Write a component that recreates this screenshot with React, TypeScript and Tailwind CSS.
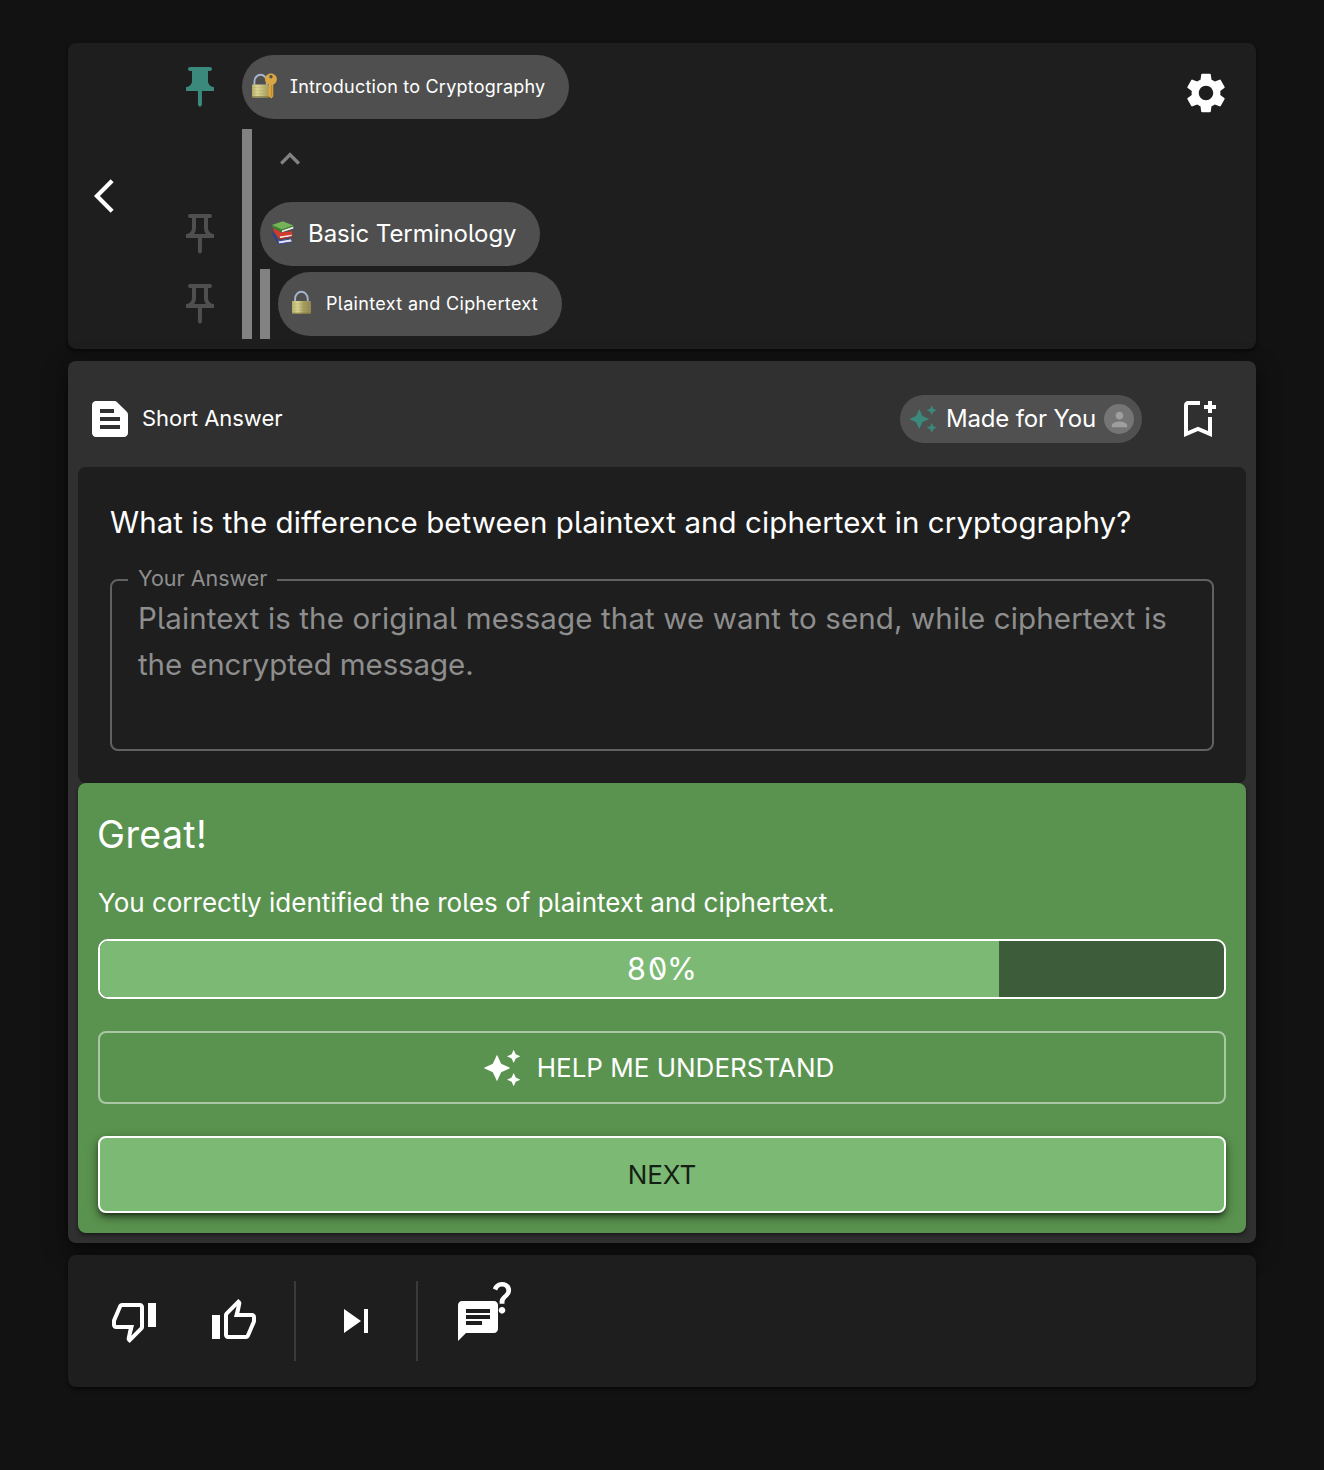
import React from 'react';
import type { ReactNode } from 'react';
import {
  MdArrowBackIosNew,
  MdAutoAwesome,
  MdChat,
  MdExpandLess,
  MdOutlineBookmarkAdd,
  MdOutlinePushPin,
  MdPerson,
  MdPushPin,
  MdQuestionMark,
  MdSettings,
  MdSkipNext,
  MdTextSnippet,
} from 'react-icons/md';

function LockKeyIcon() {
  return (
    <svg width="28" height="28" viewBox="0 0 28 28" className="mb-[3px] shrink-0">
      <defs>
        <linearGradient id="brassA" x1="0" x2="1" y1="0" y2="0">
          <stop offset="0" stopColor="#b5ae66" />
          <stop offset="0.3" stopColor="#dcd695" />
          <stop offset="1" stopColor="#a39a5c" />
        </linearGradient>
      </defs>
      <path d="M3.4 14V9.5a6.2 6.7 0 0 1 12.4 0V14" fill="none" stroke="#a5b4cc" strokeWidth="1.9" />
      <rect x="1" y="12.4" width="17" height="13" rx="0.6" fill="url(#brassA)" />
      <path d="M1 15.5h17M1 18.6h17M1 21.7h17" stroke="#a9a05d" strokeWidth="0.7" opacity="0.4" />
      <path d="M1 24.8h17" stroke="#857c42" strokeWidth="1" />
      <path
        fillRule="evenodd"
        fill="#d9a641"
        d="M19.9 1.6c3.4 0 6 2.5 6 5.7 0 2.4-1.5 4.4-3.6 5.3v11.9l-2 2-2.4-1.9v-1.4l-1.3-1 1.3-1.2-1.2-1.1 1.2-1.2-1.2-1.1 1.2-1.2v-3.8c-2.3-.8-3.9-2.9-3.9-5.3 0-3.2 2.6-5.7 5.9-5.7zm.1 1.5a1.7 1.7 0 1 0 0 3.4 1.7 1.7 0 0 0 0-3.4z"
      />
      <path d="M20.7 13v11.8" stroke="#b07c25" strokeWidth="0.8" />
    </svg>
  );
}

function LockIcon() {
  return (
    <svg width="22" height="25" viewBox="0 0 22 25" className="mb-[3px] shrink-0">
      <defs>
        <linearGradient id="brassB" x1="0" x2="1" y1="0" y2="0">
          <stop offset="0" stopColor="#b9b26a" />
          <stop offset="0.3" stopColor="#dbd594" />
          <stop offset="0.6" stopColor="#a79f62" />
          <stop offset="1" stopColor="#8f874e" />
        </linearGradient>
      </defs>
      <path d="M4.1 12V8.6a6.3 6.8 0 0 1 12.6 0V12" fill="none" stroke="#a5b4cc" strokeWidth="1.9" />
      <rect x="1" y="10.9" width="19" height="12.8" rx="0.6" fill="url(#brassB)" />
      <path d="M1 14h19M1 17h19M1 20h19" stroke="#8f874e" strokeWidth="0.6" opacity="0.4" />
      <path d="M1 23.2h19" stroke="#7b733c" strokeWidth="0.9" />
    </svg>
  );
}

function BooksIcon() {
  return (
    <svg width="24" height="26" viewBox="0 0 24 26" className="mb-[3px] shrink-0">
      <path d="M1.2 11l6.8 10.8v2.8L1.8 15.3z" fill="#2b3f94" />
      <path d="M7.4 20.8l12.4-2 1 3-12.6 2z" fill="#e4e3ee" />
      <path d="M7.2 20.4l12.2-2 1 .8-12.8 2.2zM7.9 23.6l12.6-2.2.6.9-12.8 2.3z" fill="#34489c" />
      <path d="M2.2 8l8.2 4.6 10.4-1.4.8 2.4-.6 2.4-12.8 2.4-5.6-7.4z" fill="#d33a30" />
      <path d="M8.8 16.6l11.8-1.8.2 1.4-11.8 2z" fill="#f0e9ea" />
      <path d="M8 18.6l12.8-2.4.2 1-12.6 2.4z" fill="#b02823" />
      <path d="M10.6 10l11.5-3.6.3 2.2-11.5 3.6z" fill="#ecefe6" />
      <path d="M.8 5L11.8 1.2l10.7 4.4-12 4z" fill="#74b357" />
      <path d="M.8 5l9.7 4.6 12-4v.8L11 10.4v2L1.6 7.6z" fill="#3f8035" />
    </svg>
  );
}

function ThumbDownIcon() {
  return (
    <svg width="48" height="48" viewBox="0 0 24 24" fill="currentColor">
      <path d="M15 3H6c-.83 0-1.54.5-1.84 1.22l-3.02 7.05c-.09.23-.14.47-.14.73v2c0 1.1.9 2 2 2h6.31l-.95 4.57-.03.32c0 .41.17.79.44 1.06L9.83 23l6.59-6.59c.36-.36.58-.86.58-1.41V5c0-1.1-.9-2-2-2zm0 12l-4.34 4.34L12 14H3v-2l3-7h9v10zm4-12h4v12h-4z" />
    </svg>
  );
}

function ThumbUpIcon() {
  return (
    <svg width="48" height="48" viewBox="0 0 24 24" fill="currentColor">
      <path d="M9 21h9c.83 0 1.54-.5 1.84-1.22l3.02-7.05c.09-.23.14-.47.14-.73v-2c0-1.1-.9-2-2-2h-6.31l.95-4.57.03-.32c0-.41-.17-.79-.44-1.06L14.17 1 7.58 7.59C7.22 7.95 7 8.45 7 9v10c0 1.1.9 2 2 2zM9 9l4.34-4.34L12 10h9v2l-3 7H9V9zM1 9h4v12H1z" />
    </svg>
  );
}

function Chip({ className, children }: { className: string; children: ReactNode }) {
  return (
    <div className={`flex h-16 shrink-0 items-center rounded-full bg-[#4f4f4f] whitespace-nowrap ${className}`}>
      {children}
    </div>
  );
}

function TopicPanel() {
  return (
    <section className="flex h-[306px] rounded-lg bg-[#1e1e1e] shadow-[0_2px_4px_rgba(0,0,0,0.6)]">
      <button className="ml-4 flex w-10 items-center justify-center">
        <MdArrowBackIosNew size={40} />
      </button>
      <div className="ml-[52px] flex w-12 flex-col pt-5 text-[#4f4f4f]">
        <MdPushPin size={48} className="text-[#3b897c]" />
        <MdOutlinePushPin size={48} className="mt-[99px]" />
        <MdOutlinePushPin size={48} className="mt-[22px]" />
      </div>
      <div className="ml-[18px] flex flex-1 flex-col pt-3">
        <Chip className="w-[327px] pl-[9px]">
          <LockKeyIcon />
          <span className="mb-[2px] ml-[11px] text-[18px] tracking-[0.22px]">Introduction to Cryptography</span>
        </Chip>
        <div className="mt-[10px] flex h-[210px]">
          <div className="w-[10px] bg-[#828282]" />
          <div className="ml-2 flex flex-col">
            <button className="mt-[10px] ml-[10px] w-10 text-[#828282]">
              <MdExpandLess size={40} />
            </button>
            <Chip className="mt-[23px] w-[280px] pl-[11px]">
              <BooksIcon />
              <span className="ml-[13px] text-[24px] tracking-[-0.05px]">Basic Terminology</span>
            </Chip>
            <div className="mt-[3px] flex h-[70px]">
              <div className="w-[10px] bg-[#828282]" />
              <Chip className="mt-[3px] ml-2 w-[284px] pl-[13px]">
                <LockIcon />
                <span className="mb-[2px] ml-[13px] text-[18px] tracking-[0.34px]">Plaintext and Ciphertext</span>
              </Chip>
            </div>
          </div>
        </div>
      </div>
      <button className="mt-[26px] mr-[26px] h-12 w-12">
        <MdSettings size={48} />
      </button>
    </section>
  );
}

function QuestionHeader() {
  return (
    <header className="flex h-[96px] items-center pr-[24px] pl-[8px]">
      <MdTextSnippet size={48} />
      <span className="mb-[2px] ml-[8px] text-[22px] leading-[30px] tracking-[-0.03px]">Short Answer</span>
      <div className="ml-auto flex h-12 w-[242px] items-center rounded-full bg-[#505050] pl-[8px]">
        <MdAutoAwesome size={30} className="shrink-0 text-[#3b897c]" />
        <span className="ml-[8px] w-[158px] text-[24px] tracking-[-0.17px] whitespace-nowrap">Made for You</span>
        <span className="flex h-[30px] w-[30px] shrink-0 items-center justify-center rounded-full bg-[#757575] text-[#9e9e9e]">
          <MdPerson size={23} />
        </span>
      </div>
      <button className="ml-8">
        <MdOutlineBookmarkAdd size={48} />
      </button>
    </header>
  );
}

function AnswerPanel() {
  return (
    <div className="h-[316px] rounded-lg bg-[#1e1e1e] px-8 pt-8">
      <h2 className="text-[29.5px] leading-[46px] tracking-[0.075px] whitespace-nowrap">
        What is the difference between plaintext and ciphertext in cryptography?
      </h2>
      <div className="relative mt-[34px] h-[172px] rounded-lg border-2 border-[#616161] pt-[14px] pl-[26px] text-[29.5px] leading-[46px] text-[#8e8e8e]">
        <label className="absolute -top-[19px] left-4 w-[149px] bg-[#1e1e1e] pl-[10px] text-[21.5px] leading-[32px]">
          Your Answer
        </label>
        <p className="tracking-[0.13px] whitespace-nowrap">
          Plaintext is the original message that we want to send, while ciphertext is
        </p>
        <p className="tracking-[-0.1px]">the encrypted message.</p>
      </div>
    </div>
  );
}

function FeedbackPanel() {
  return (
    <div className="flex h-[450px] flex-col rounded-lg bg-[#5a934f] px-5 shadow-[0_2px_4px_rgba(0,0,0,0.5)]">
      <h3 className="mt-[26px] -ml-px text-[37.5px] leading-[52px] tracking-[0.4px]">Great!</h3>
      <p className="mt-[22px] text-[26px] leading-[40px]">
        You correctly identified the roles of plaintext and ciphertext.
      </p>
      <div className="relative mt-4 flex h-[60px] shrink-0 items-center justify-center overflow-hidden rounded-[10px] border-2 border-white bg-[#3d5c39]">
        <div className="absolute inset-y-0 left-0 w-4/5 bg-[#7cb974]" />
        <span className="relative mb-px ml-px text-[30.5px] tracking-[0.9px]">
          8<span className="inline-block -scale-x-100">0</span>%
        </span>
      </div>
      <button className="mt-8 flex h-[73px] shrink-0 items-center justify-center rounded-lg border-2 border-[#a9c7a4] pr-[8px] text-[26px]">
        <MdAutoAwesome size={40} />
        <span className="ml-[15px]">HELP ME UNDERSTAND</span>
      </button>
      <button className="mt-8 flex h-[77px] shrink-0 items-center justify-center rounded-lg border-2 border-white bg-[#7cb974] text-[26px] text-[#151f14] shadow-[0_6px_2px_-4px_rgba(0,0,0,0.2),0_4px_4px_rgba(0,0,0,0.25),0_4px_12px_rgba(0,0,0,0.4)]">
        NEXT
      </button>
    </div>
  );
}

function ActionBar() {
  return (
    <footer className="flex h-[132px] items-center rounded-lg bg-[#1e1e1e] pl-[42px] shadow-[0_2px_4px_rgba(0,0,0,0.6)]">
      <button>
        <ThumbDownIcon />
      </button>
      <button className="ml-[52px]">
        <ThumbUpIcon />
      </button>
      <div className="ml-9 h-20 w-[2px] bg-[#3a3a3a]" />
      <button className="ml-9">
        <MdSkipNext size={48} />
      </button>
      <div className="ml-9 h-20 w-[2px] bg-[#3a3a3a]" />
      <button className="relative ml-9">
        <MdChat size={48} />
        <MdQuestionMark size={40} className="absolute -top-5 left-7" />
      </button>
    </footer>
  );
}

export default function App() {
  return (
    <main className="flex min-h-[1470px] w-full flex-col gap-3 bg-[#121212] px-[68px] pt-[43px] font-['Inter',sans-serif] text-white [font-feature-settings:'cv05','cv08','zero']">
      <TopicPanel />
      <section className="h-[882px] rounded-lg bg-[#303030] px-[10px] pt-[10px] shadow-[0_6px_12px_rgba(0,0,0,0.35),0_8px_28px_rgba(0,0,0,0.3)]">
        <QuestionHeader />
        <AnswerPanel />
        <FeedbackPanel />
      </section>
      <ActionBar />
    </main>
  );
}
